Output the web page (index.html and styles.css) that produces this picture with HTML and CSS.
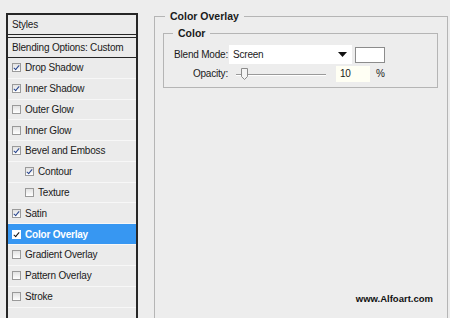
FILE: index.html
```html
<!DOCTYPE html>
<html lang="en">
<head>
    <meta charset="UTF-8">
    <title>Layer Style - Color Overlay</title>
    <link rel="stylesheet" href="styles.css">
</head>
<body>
    <div class="panel">
        <div class="panel-head">Styles</div>
        <div class="panel-blend">Blending Options: Custom</div>
        <ul class="fx-list">
            <li><span class="cb on"></span>Drop Shadow</li>
            <li><span class="cb on"></span>Inner Shadow</li>
            <li><span class="cb"></span>Outer Glow</li>
            <li><span class="cb"></span>Inner Glow</li>
            <li><span class="cb on"></span>Bevel and Emboss</li>
            <li class="sub"><span class="cb on"></span>Contour</li>
            <li class="sub"><span class="cb"></span>Texture</li>
            <li><span class="cb on"></span>Satin</li>
            <li class="active"><span class="cb on"></span>Color Overlay</li>
            <li><span class="cb"></span>Gradient Overlay</li>
            <li><span class="cb"></span>Pattern Overlay</li>
            <li><span class="cb"></span>Stroke</li>
        </ul>
    </div>

    <fieldset class="group">
        <legend>Color Overlay</legend>
        <fieldset class="inner">
            <legend>Color</legend>
            <div class="row">
                <label class="lbl">Blend Mode:</label>
                <div class="select">
                    <span>Screen</span>
                    <svg width="9" height="5" viewBox="0 0 9 5"><path d="M0 0h9L4.5 5z" fill="#111"/></svg>
                </div>
                <div class="swatch"></div>
            </div>
            <div class="row">
                <label class="lbl">Opacity:</label>
                <div class="slider">
                    <div class="track"></div>
                    <svg class="thumb" width="7" height="12" viewBox="0 0 7 12">
                        <path d="M0.5 0.5h6v8l-3 3l-3-3z" fill="#f4f4f4" stroke="#8c8c8c"/>
                    </svg>
                </div>
                <div class="num">10</div>
                <span class="pct">%</span>
            </div>
        </fieldset>
        <div class="credit">www.Alfoart.com</div>
    </fieldset>
</body>
</html>
```

FILE: styles.css
```css
/* Layer style dialog */
body {
    margin: 0;
    height: 318px;
    overflow: hidden;
    display: flex;
    align-items: flex-start;
    background-color: #ededed;
    font-family: "Liberation Sans", Arial, sans-serif;
    font-size: 10px;
    letter-spacing: -0.2px;
    color: #1a1a1a;
}

/* Left list of effects */
.panel {
    margin: 13px 0 0 6px;
    width: 132px;
    height: 305px;
    box-sizing: border-box;
    border: 2px solid #262626;
    border-bottom: none;
    background-color: #ebebeb;
    overflow: hidden;
}

.panel-head {
    height: 19px;
    line-height: 19px;
    padding-left: 4px;
    border-bottom: 1px solid #262626;
}

.panel-blend {
    height: 19px;
    line-height: 19px;
    padding-left: 4px;
    margin-top: 2px;
    border-top: 1px solid #262626;
    border-bottom: 1px solid #262626;
}

.fx-list {
    list-style: none;
    margin: 0;
    padding: 0;
}

.fx-list li {
    height: 20px;
    display: flex;
    align-items: center;
    padding-left: 4px;
    border-bottom: 1px solid #f7f7f7;
}

.fx-list li:nth-child(odd) {
    height: 19.6px;
}

.fx-list li.sub {
    padding-left: 17px;
}

.fx-list li.active {
    background-color: #3797f2;
    color: #fff;
    font-weight: bold;
}

.cb {
    width: 9px;
    height: 9px;
    box-sizing: border-box;
    border: 1px solid #9a9a9a;
    background: linear-gradient(#e2e2e2, #ffffff);
    margin-right: 4px;
    flex: none;
    position: relative;
}

.cb.on::after {
    content: "";
    position: absolute;
    left: 2px;
    top: 0px;
    width: 2px;
    height: 5px;
    border: solid #27448e;
    border-width: 0 1.5px 1.5px 0;
    transform: rotate(40deg);
}

.active .cb {
    border-color: #fff;
    background: #fff;
}

.active .cb.on::after {
    border-color: #111;
}

/* Right side groups */
.group {
    margin: 10px 0 0 16px;
    width: 294px;
    height: 308px;
    box-sizing: border-box;
    padding: 4px 9px 0 8px;
    border: 1px solid #b5b5b5;
    border-bottom: none;
    display: flex;
    flex-direction: column;
}

.group legend,
.inner legend {
    font-weight: bold;
    font-size: 10.5px;
    letter-spacing: 0;
    line-height: 13px;
    padding: 0 5px;
    margin-left: 2px;
}

.inner legend {
    margin-left: 9px;
}

.inner {
    margin: 0;
    padding: 5px 0 3px 0;
    border: 1px solid #b5b5b5;
    height: 61px;
    box-sizing: border-box;
}

.row {
    display: flex;
    align-items: center;
    height: 19px;
}

.row + .row {
    height: 19px;
}

.lbl {
    width: 64px;
    text-align: right;
    flex: none;
}

.select {
    margin-left: 1px;
    width: 123px;
    height: 19px;
    box-sizing: border-box;
    background-color: #fff;
    display: flex;
    align-items: center;
    justify-content: space-between;
    padding: 0 5px 0 4px;
}

.swatch {
    margin-left: 3px;
    width: 30px;
    height: 16px;
    box-sizing: border-box;
    border: 1px solid #8c8c8c;
    background-color: #fff;
}

.slider {
    margin-left: 8px;
    width: 90px;
    height: 12px;
    position: relative;
}

.track {
    margin-top: 6px;
    height: 1px;
    background-color: #9a9a9a;
    border-bottom: 1px solid #fff;
}

.thumb {
    position: absolute;
    left: 5px;
    top: 0;
}

.num {
    margin-left: 10px;
    width: 34px;
    height: 16px;
    line-height: 16px;
    padding-left: 4px;
    box-sizing: border-box;
    background-color: #fffff4;
}

.pct {
    margin-left: 6px;
}

.credit {
    margin-top: auto;
    margin-bottom: 14px;
    align-self: flex-end;
    margin-right: 5px;
    font-weight: bold;
    font-size: 9.5px;
    letter-spacing: 0;
    color: #111;
}
```
